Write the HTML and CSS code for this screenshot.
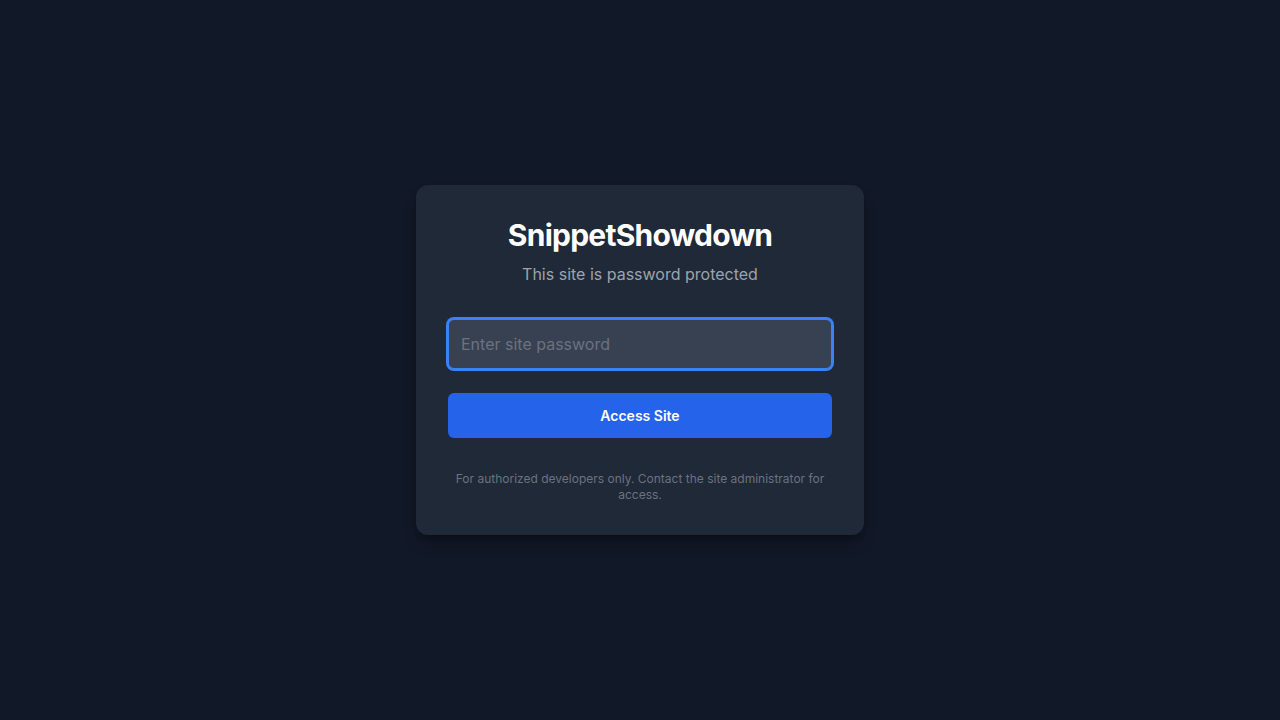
FILE: index.html
```html
<!DOCTYPE html>
<html lang="en">
<head>
<meta charset="utf-8">
<title>SnippetShowdown</title>
<link rel="stylesheet" href="styles.css">
</head>
<body>
<main class="page">
  <section class="card">
    <h1 class="title">SnippetShowdown</h1>
    <p class="subtitle">This site is password protected</p>
    <form class="form">
      <input class="input" type="password" placeholder="Enter site password">
      <button class="button" type="button">Access Site</button>
    </form>
    <p class="note">For authorized developers only. Contact the site administrator for access.</p>
  </section>
</main>
</body>
</html>
```

FILE: styles.css
```css
* { box-sizing: border-box; }
html, body { margin: 0; padding: 0; }
body {
  background: #111827;
  font-family: Inter, "Noto Sans", "Liberation Sans", sans-serif;
  color: #ffffff;
}
.page {
  min-height: 720px;
  display: flex;
  align-items: center;
  justify-content: center;
}
.card {
  width: 448px;
  background: #1f2937;
  border-radius: 12px;
  padding: 32px;
  box-shadow: 0 10px 15px -3px rgba(0,0,0,0.3), 0 4px 6px -4px rgba(0,0,0,0.3);
  text-align: center;
}
.title {
  margin: 0;
  font-size: 30px;
  line-height: 36px;
  font-weight: 700;
  letter-spacing: -0.025em;
  color: #ffffff;
}
.subtitle {
  margin: 9px 0 0;
  font-size: 16px;
  line-height: 24px;
  color: #9ca3af;
}
.form {
  margin-top: 33px;
  display: flex;
  flex-direction: column;
  gap: 24px;
}
.input {
  width: 100%;
  height: 50px;
  padding: 12px 12px;
  background: #374151;
  border: 1px solid #3b82f6;
  border-radius: 6px;
  box-shadow: 0 0 0 2px #3b82f6;
  color: #fff;
  font-family: inherit;
  font-size: 16px;
  line-height: 24px;
  outline: none;
}
.input::placeholder { color: #6b7280; }
.button {
  width: 100%;
  height: 45px;
  border: 0;
  border-radius: 6px;
  background: #2563eb;
  color: #fff;
  font-family: inherit;
  font-size: 14px;
  font-weight: 600;
  cursor: pointer;
}
.note {
  margin: 33px 0 0;
  font-size: 12px;
  line-height: 16px;
  color: #6b7280;
}
```
